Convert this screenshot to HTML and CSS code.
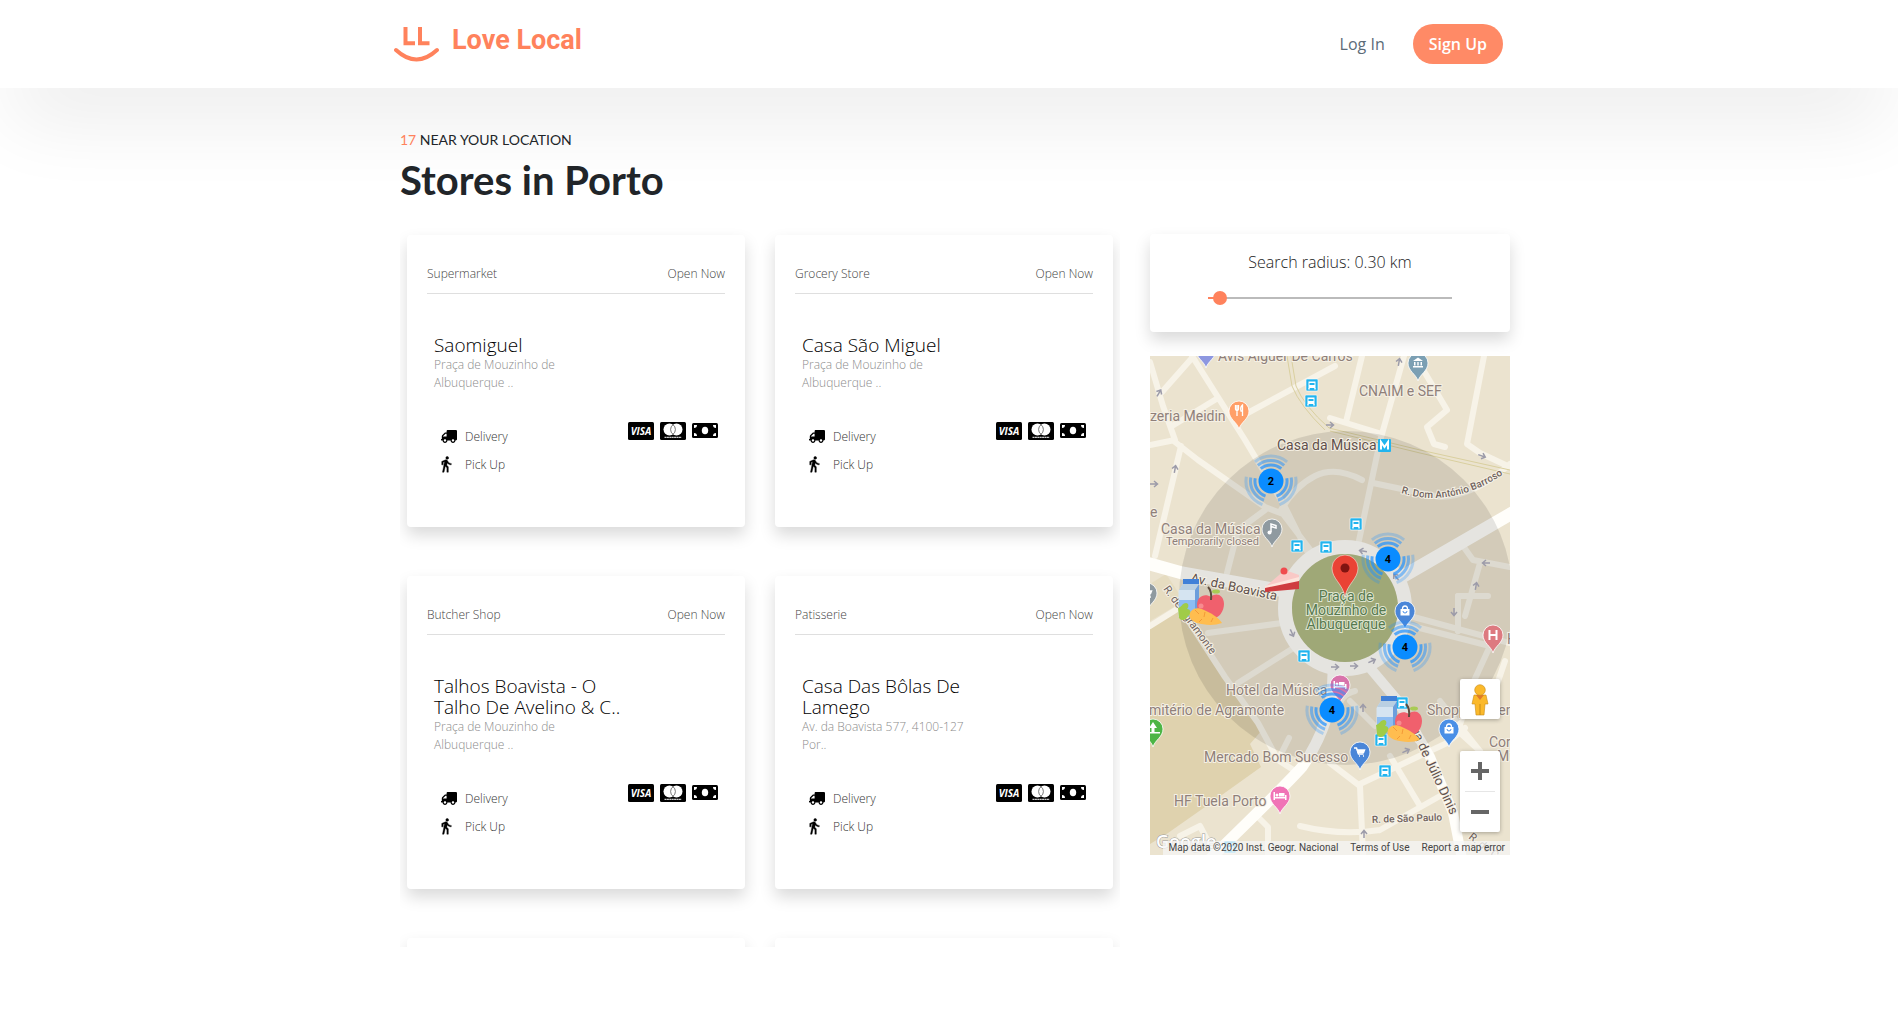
FILE: index.html
```html
<!DOCTYPE html>
<html lang="en">
<head>
<meta charset="utf-8">
<title>Love Local</title>
<meta name="viewport" content="width=device-width, initial-scale=1">
<link rel="stylesheet" href="styles.css">
</head>
<body>
<svg class="sprite" aria-hidden="true">
  <symbol id="truck" viewBox="0 0 640 512"><path transform="matrix(-1 0 0 1 640 0)" d="M624 352h-16V243.900c0-12.700-5.100-24.900-14.100-33.900L494 110.100c-9-9-21.200-14.100-33.900-14.100H416V48c0-26.500-21.500-48-48-48H48C21.500 0 0 21.500 0 48v320c0 26.500 21.500 48 48 48h16c0 53 43 96 96 96s96-43 96-96h128c0 53 43 96 96 96s96-43 96-96h48c8.800 0 16-7.200 16-16v-32c0-8.800-7.200-16-16-16zM160 464c-26.500 0-48-21.500-48-48s21.500-48 48-48 48 21.500 48 48-21.500 48-48 48zm320 0c-26.500 0-48-21.500-48-48s21.500-48 48-48 48 21.500 48 48-21.500 48-48 48zm80-208H416V144h44.100l99.900 99.900V256z"/></symbol>
  <symbol id="walk" viewBox="5 1 15 23"><path stroke="#000" stroke-width=".5" d="M13.500 5.500c1.100 0 2-.9 2-2s-.9-2-2-2-2 .9-2 2 .9 2 2 2zM9.800 8.900L7 23h2.100l1.800-8 2.100 2v6h2v-7.500l-2.100-2 .6-3C14.800 12 16.800 13 19 13v-2c-1.900 0-3.500-1-4.300-2.400l-1-1.600c-.4-.6-1-1-1.700-1-.3 0-.5.1-.8.100L6 8.300V13h2V9.600l1.800-.7"/></symbol>
  <symbol id="visa" viewBox="0 0 26 18"><rect width="26" height="18" rx="1.500"/><text x="13" y="13" text-anchor="middle" class="visa-word">VISA</text></symbol>
  <symbol id="mastercard" viewBox="0 0 26 18"><rect width="26" height="18" rx="1.500"/><circle cx="9.500" cy="7.500" r="6" fill="#fff"/><circle cx="16.500" cy="7.500" r="6" fill="#fff"/><path d="M13 2.700a6 6 0 0 1 0 9.600a6 6 0 0 1 0-9.600z" fill="#fff" stroke="#555" stroke-width=".8"/><path d="M4.500 15.400h17" stroke="#ccc" stroke-width="1.200" stroke-dasharray="2 .4"/></symbol>
  <symbol id="cash" viewBox="0 0 26 18"><rect y="1" width="26" height="15" rx="1.500"/><ellipse cx="13" cy="8.500" rx="3.200" ry="3.800" fill="#fff"/><path fill="#fff" d="M2 3h3a3 3 0 0 1-3 3zM24 3h-3a3 3 0 0 0 3 3zM2 14h3a3 3 0 0 0-3-3zM24 14h-3a3 3 0 0 1 3-3z"/></symbol>
</svg>

<header class="topbar">
  <div class="topbar-inner">
    <a class="brand" href="#">
      <svg class="brand-mark" viewBox="0 0 46 36" aria-hidden="true"><path d="M11.500 1v16.200h9.500M26 1v16.200h9.500" fill="none" stroke="#ff825c" stroke-width="4"/><path d="M2 24Q22.500 43 43 24" fill="none" stroke="#ff825c" stroke-width="4" stroke-linecap="round"/></svg>
      <span>Love Local</span>
    </a>
    <nav class="account">
      <a class="login" href="#">Log In</a>
      <button class="signup" type="button">Sign Up</button>
    </nav>
  </div>
</header>

<main class="page">
  <p class="count"><span>17</span> NEAR YOUR LOCATION</p>
  <h1>Stores in Porto</h1>
  <div class="columns">
    <section class="stores">
      <article class="card">
        <div class="card-head"><span>Supermarket</span><span>Open Now</span></div>
        <div class="card-body">
          <h2>Saomiguel</h2>
          <p class="address">Praça de Mouzinho de<br>Albuquerque ..</p>
          <div class="services">
            <ul><li><svg class="i-truck"><use href="#truck"/></svg>Delivery</li><li><svg class="i-walk"><use href="#walk"/></svg>Pick Up</li></ul>
            <div class="pay"><svg><use href="#visa"/></svg><svg><use href="#mastercard"/></svg><svg><use href="#cash"/></svg></div>
          </div>
        </div>
      </article>
      <article class="card">
        <div class="card-head"><span>Grocery Store</span><span>Open Now</span></div>
        <div class="card-body">
          <h2>Casa São Miguel</h2>
          <p class="address">Praça de Mouzinho de<br>Albuquerque ..</p>
          <div class="services">
            <ul><li><svg class="i-truck"><use href="#truck"/></svg>Delivery</li><li><svg class="i-walk"><use href="#walk"/></svg>Pick Up</li></ul>
            <div class="pay"><svg><use href="#visa"/></svg><svg><use href="#mastercard"/></svg><svg><use href="#cash"/></svg></div>
          </div>
        </div>
      </article>
      <article class="card">
        <div class="card-head"><span>Butcher Shop</span><span>Open Now</span></div>
        <div class="card-body">
          <h2>Talhos Boavista - O<br>Talho De Avelino &amp; C..</h2>
          <p class="address">Praça de Mouzinho de<br>Albuquerque ..</p>
          <div class="services">
            <ul><li><svg class="i-truck"><use href="#truck"/></svg>Delivery</li><li><svg class="i-walk"><use href="#walk"/></svg>Pick Up</li></ul>
            <div class="pay"><svg><use href="#visa"/></svg><svg><use href="#mastercard"/></svg><svg><use href="#cash"/></svg></div>
          </div>
        </div>
      </article>
      <article class="card">
        <div class="card-head"><span>Patisserie</span><span>Open Now</span></div>
        <div class="card-body">
          <h2>Casa Das Bôlas De<br>Lamego</h2>
          <p class="address">Av. da Boavista 577, 4100-127<br>Por..</p>
          <div class="services">
            <ul><li><svg class="i-truck"><use href="#truck"/></svg>Delivery</li><li><svg class="i-walk"><use href="#walk"/></svg>Pick Up</li></ul>
            <div class="pay"><svg><use href="#visa"/></svg><svg><use href="#mastercard"/></svg><svg><use href="#cash"/></svg></div>
          </div>
        </div>
      </article>
      <article class="card card-next"></article>
      <article class="card card-next"></article>
    </section>

    <aside class="side">
      <div class="radius">
        <label for="radius">Search radius: 0.30 km</label>
        <input id="radius" type="range" min="0" max="100" value="2">
      </div>
      <div class="map">
        <svg class="map-canvas" viewBox="0 0 360 499" preserveAspectRatio="xMidYMid slice">
          <defs>
            <g id="bus"><rect x="-6" y="-6" width="12" height="12" rx="1" fill="#22b4ee" stroke="#fff" stroke-width=".6"/><path d="M-3.500-3.500h7v6.500h-7z" fill="#fff"/><path d="M-2.500-2h5v2h-5z" fill="#22b4ee"/><path d="M-3 3v1.500M3 3v1.500" stroke="#fff" stroke-width="1.500"/></g>
            <path id="pin" d="M0 18C-2 11-10 8-10 0a10 10 0 0 1 20 0C10 8 2 11 0 18z" stroke="#fff" stroke-width=".8"/>
            <g id="fan" fill="none" stroke="#1e90ff" stroke-width="3"><path opacity=".7" d="M-10.300-12.300A16 16 0 0 1 10.300-12.300"/><path opacity=".5" d="M-13.200-15.700A20.500 20.500 0 0 1 13.200-15.700"/><path opacity=".27" d="M-16.100-19.200A25 25 0 0 1 16.100-19.200"/></g>
            <g id="cluster"><use href="#fan"/><use href="#fan" transform="rotate(120)"/><use href="#fan" transform="rotate(240)"/><circle r="12.500" fill="#0a8cff"/></g>
            <path id="arrow" d="M-4 0H3M0-3L3.500 0L0 3" fill="none" stroke="#9c9ba9" stroke-width="1.500"/>
            <g id="bag"><path d="M-4.500-2h9v6.500h-9z" fill="#fff"/><path d="M-2.500-2a2.500 3 0 0 1 5 0" fill="none" stroke="#fff" stroke-width="1.300"/><path d="M-2 0a2 2 0 0 0 4 0" fill="none" stroke="#4a8fe6"/></g>
            <g id="cart" fill="none" stroke="#fff" stroke-width="1.500"><path d="M-6-4h2.500l2 6h5"/><path d="M-2.500-2h7l-1 2.500h-5.500z" fill="#fff"/><path d="M-1 4h1M3 4h1"/></g>
            <g id="bed" fill="#fff"><path d="M-6.500-4h1.500v8h-1.500zM-5 1h11.500v1.500H-5zM5-1h1.500v5H5zM-1-3h5.500v3.500H-1z"/><circle cx="-3" cy="-1" r="1.500"/></g>
            <g id="groceries">
              <path d="M6 1h16v5H6z" fill="#4080d8"/><path d="M6 6h16l-4 6v27H1.500V13z" fill="#d5e4f1"/><path d="M2 12h16l4-6H6z" fill="#b9cfe2"/><path d="M2 22h16v17H2z" fill="#8dbdf2"/><path d="M18 12l4-6v32h-4z" fill="#6c9edc"/>
              <path d="M34 19c5-5 13-2 13 7 0 7-5 14-10 14-2 0-2-1-4-1s-2 1-4 1c-5 0-9-6-9-13 0-9 8-12 14-8z" fill="#f0606d"/><path d="M34 22Q35 13 31 9" fill="none" stroke="#5e4b3d" stroke-width="2"/><ellipse cx="39" cy="13.500" rx="4" ry="2" fill="#a9cb54"/><circle cx="24" cy="28" r="2.500" fill="#f78b90"/>
              <path d="M1 30c4-1 4-5 8-5 3 0 3 4 1 6 4 0 5 5 1 7-2 5-7 5-9 2z" fill="#a0cc48"/>
              <path d="M13 35c2-5 8-6 14-3 7 3 14 7 18 13-8 3-18 2-25 0-5-2-9-5-7-10z" fill="#ffbd4f"/><path d="M18 32l4 4M28 34l-1 5M22 44l3-3M36 40l-2 4" stroke="#f49a37"/>
            </g>
          </defs>
          <rect width="360" height="499" fill="#ebe3cf"/>
          <path d="M0 270L32 250L75 321L112 374L100 388L111 411L55 451L18 477L0 488z" fill="#dfd2ae"/>
          <path d="M0 228L16 218L34 245L0 265z" fill="#e6dcc0"/>
          <g fill="none" stroke="#f7f3e8" stroke-width="6" stroke-linejoin="round" stroke-linecap="round">
            <path d="M42 0L95 84L135 151L158 197M0 6L13 50L25 84L0 89M25 86L48 104L115 151L133 158L165 200M31 90L5 200M12 36L42 2M22 70L68 42M92 60L185 10M131 154Q145 130 165 120T212 124M115 154L88 174L77 217"/>
            <path d="M254 0L230 85L207 194M212 0L196 66M180 62L232 78M268 5L297 54L277 71L284 88L295 91M334 0L317 88L330 97L360 111M223 127L290 141Q325 140 360 108M313 190L323 204L360 211M330 207L315 260M308 240H338M308 242V275"/>
            <path d="M260 260L360 287M262 270L340 290L323 327L308 375L330 395M355 305L343 340M180 407L210 430L213 499M210 428L297 387L315 372M240 400L270 450M230 474L290 440M150 470Q190 480 230 474M308 240V275M290 345L330 395"/>
            <path d="M58 277L132 267M88 327L145 291M128 404L139 382M108 461L118 471V499M30 480L50 470L65 499M38 264L75 321L108 367L128 404L145 415M200 345L225 370M205 335Q185 340 190 360M0 270L32 250"/>
          </g>
          <path d="M137 0L142 30Q150 50 175 74M141 0L146 30Q154 50 179 72L270 94L360 114M180 75L270 97L360 118" fill="none" stroke="#d9cf9f" stroke-width="1"/>
          <g fill="none" stroke="#fffefa" stroke-linecap="round">
            <path d="M-4 207L32 217L140 236" stroke-width="13"/><path d="M250 222L364 156" stroke-width="13"/>
            <path d="M183 314Q184 365 152 411Q135 430 60 503" stroke-width="11"/><path d="M215 306L247 344L280 401L303 457L312 503" stroke-width="10"/>
            <ellipse cx="195" cy="252" rx="60" ry="61" stroke-width="14"/>
          </g>
          <ellipse cx="195" cy="252" rx="53" ry="54" fill="#b1bb85"/>
          <circle cx="196" cy="242" r="167" fill="#000" fill-opacity=".1"/>
          <use href="#arrow" transform="translate(9 37) rotate(-60)"/><use href="#arrow" transform="translate(25 113) rotate(-80)"/><use href="#arrow" x="4" y="128"/><use href="#arrow" x="180" y="69"/><use href="#arrow" transform="translate(249 6) rotate(-80)"/><use href="#arrow" transform="translate(332 100) rotate(20)"/><use href="#arrow" transform="translate(336 207) rotate(180)"/><use href="#arrow" transform="translate(326 230) rotate(-80)"/><use href="#arrow" transform="translate(304 256) rotate(90)"/><use href="#arrow" transform="translate(213 195) rotate(190)"/><use href="#arrow" transform="translate(246 221) rotate(230)"/><use href="#arrow" x="185" y="311"/><use href="#arrow" x="204" y="310"/><use href="#arrow" transform="translate(222 305) rotate(-25)"/><use href="#arrow" transform="translate(213 352) rotate(-90)"/><use href="#arrow" transform="translate(256 395) rotate(-25)"/><use href="#arrow" transform="translate(214 478) rotate(-90)"/><use href="#arrow" transform="translate(142 277) rotate(65)"/>
          <use href="#bus" x="162" y="29"/><use href="#bus" x="161" y="45"/><use href="#bus" x="147" y="190"/><use href="#bus" x="176" y="191"/><use href="#bus" x="206" y="168"/><use href="#bus" x="154" y="300"/><use href="#bus" x="235" y="415"/><use href="#bus" x="231" y="384"/><use href="#bus" x="252" y="347"/><use href="#bus" x="80" y="491"/>
          <rect x="228" y="83" width="13" height="13" rx="1" fill="#22b4ee"/><path d="M231 93.500V86L234.500 91L238 86V93.500" fill="none" stroke="#fff" stroke-width="2"/>
          <g class="places">
            <text x="68" y="5">Avis Aiguer De Carros</text><text x="0" y="65">zeria Meidin</text><text x="209" y="40">CNAIM e SEF</text>
            <text x="127" y="94" class="dark">Casa da Música</text><text x="11" y="178">Casa da Música</text><text x="16" y="189" class="small">Temporarily closed</text>
            <text x="0" y="161">e</text><text x="76" y="339">Hotel da Música</text><text x="-1" y="359">mitério de Agramonte</text><text x="54" y="406">Mercado Bom Sucesso</text><text x="24" y="450">HF Tuela Porto</text>
            <text x="277" y="359">Shopping Center</text><text x="339" y="391">Cor</text><text x="347" y="405">Mú</text><text x="357" y="288">H</text>
            <text x="196" y="245" class="park">Praça de</text><text x="196" y="259" class="park">Mouzinho de</text><text x="196" y="273" class="park">Albuquerque</text>
            <path id="barroso" d="M251 137Q306 154 362 112" fill="none"/>
            <text class="street curved"><textPath href="#barroso">R. Dom António Barroso</textPath></text>
            <text class="street avenue" transform="translate(40 226) rotate(12)">Av. da Boavista</text>
            <text class="street" transform="translate(13 233) rotate(54)">R. de Agramonte</text>
            <text class="street avenue" transform="translate(257 366) rotate(65)">Rua de Júlio Dinis</text>
            <text class="street curved" transform="translate(222 467) rotate(-2)">R. de São Paulo</text>
            <text class="street" transform="translate(318 482) rotate(38)">R. de Cedofeita</text>
          </g>
          <g transform="translate(56 -6)"><use href="#pin" fill="#8d97e0"/></g>
          <g transform="translate(89 55)"><use href="#pin" fill="#ff9f68"/><path d="M-3.500-6v4a1.500 1.500 0 0 0 3 0V-6M-2-6V5M3.500 5V-6Q1-4 2 0h1.500" fill="none" stroke="#fff" stroke-width="1.300"/></g>
          <g transform="translate(122 173)"><use href="#pin" fill="#8f9aa0"/><path d="M-1 3V-5L4-3.500V-1L-1-2.500" fill="none" stroke="#fff" stroke-width="1.500"/><circle cx="-2.500" cy="3.500" r="2" fill="#fff"/></g>
          <g transform="translate(268 7)"><use href="#pin" fill="#7b9fb3"/><path d="M-5-2L0-5.500L5-2zM-5 3H5v1.500H-5zM-4-1h1.500v3.500H-4zM-.7-1H.7v3.500H-.7zM2.500-1H4v3.500H2.500z" fill="#fff"/></g>
          <g transform="translate(343 279)"><use href="#pin" fill="#dd7a80"/><path d="M-3.500-5V5M3.500-5V5M-3.500 0h7" stroke="#fff" stroke-width="2"/></g>
          <g transform="translate(299 373)"><use href="#pin" fill="#4a8fe6"/><use href="#bag"/></g>
          <g transform="translate(255 255)"><use href="#pin" fill="#4a86d8"/><use href="#bag"/></g>
          <g transform="translate(210 396)"><use href="#pin" fill="#4a86d8"/><use href="#cart"/></g>
          <g transform="translate(-3 237)"><use href="#pin" fill="#8f9aa0"/><use href="#cart"/></g>
          <g transform="translate(130 440)"><use href="#pin" fill="#f073b6"/><use href="#bed"/></g>
          <g transform="translate(190 329)"><use href="#pin" fill="#d873ab"/><use href="#bed"/></g>
          <g transform="translate(3 373)"><use href="#pin" fill="#4db545"/><path d="M0-7l4 6H1.500V3H7v1.500H-5V3h3.500V-1H-4z" fill="#fff"/></g>
          <use href="#groceries" x="27" y="222"/><use href="#groceries" x="225" y="339"/>
          <path d="M115 231L135 214L149 219V224L115 235z" fill="#f9c9c6"/><path d="M115 230L149 221V225L115 234z" fill="#fde5dc"/><path d="M115 232L149 225V233L115 236z" fill="#cf3c3f"/><circle cx="134" cy="215" r="3.500" fill="#f04b4e"/>
          <path d="M195 241C193 228 182 223 182 212a12.800 12.800 0 0 1 26 0C208 223 197 228 195 241z" fill="#ea4335" stroke="#fff" stroke-width=".5"/><circle cx="195" cy="212" r="4.500" fill="#811411"/>
          <g class="cluster-count"><use href="#cluster" x="121" y="125"/><text x="121" y="129">2</text><use href="#cluster" x="238" y="203"/><text x="238" y="207">4</text><use href="#cluster" x="255" y="291"/><text x="255" y="295">4</text><use href="#cluster" x="182" y="354"/><text x="182" y="358">4</text></g>
          <text x="6" y="492" class="google">Google</text>
        </svg>
        <button class="pegman" type="button" aria-label="Street View">
          <svg viewBox="0 0 18 32" width="18" height="32"><path d="M3 11h12l2 9h-3l-1 11H5L4 20H1z" fill="#fbb92b" stroke="#c88b17" stroke-width=".6"/><path d="M5 11h8l-4 5z" fill="#e0792a"/><path d="M9 20v11" stroke="#c88b17"/><circle cx="9" cy="6" r="5.300" fill="#fbb92b" stroke="#c88b17" stroke-width=".6"/></svg>
        </button>
        <div class="zoom"><button type="button" aria-label="Zoom in"><svg viewBox="0 0 18 18"><path d="M0 9h18M9 0v18" stroke="#666" stroke-width="4"/></svg></button><button type="button" aria-label="Zoom out"><svg viewBox="0 0 18 18"><path d="M0 9h18" stroke="#666" stroke-width="4"/></svg></button></div>
        <div class="credits"><span>Map data ©2020 Inst. Geogr. Nacional</span><a href="#">Terms of Use</a><a href="#">Report a map error</a></div>
      </div>
    </aside>
  </div>
</main>
</body>
</html>
```

FILE: styles.css
```css
* { box-sizing: border-box; }

body {
  margin: 0;
  background: #fff;
  color: #212529;
  font-family: "Open Sans", sans-serif;
  font-size: 16px;
}

.sprite { position: absolute; width: 0; height: 0; }

.topbar {
  background: #fff;
  box-shadow: 0 40px 80px -12px rgba(0, 0, 0, .09);
}

.topbar-inner {
  display: flex;
  justify-content: space-between;
  align-items: center;
  max-width: 1140px;
  min-height: 88px;
  margin: 0 auto;
  padding: 0 16px 0 15px;
}

.brand {
  display: flex;
  gap: 12px;
  color: #ff825c;
  font: 700 27px/28px Roboto, sans-serif;
  text-decoration: none;
}

.brand-mark { width: 46px; height: 36px; }

.account { display: flex; align-items: center; gap: 28px; }

.login { color: #5c6b78; text-decoration: none; }

.signup {
  height: 40px;
  padding: 0 16px;
  border: 0;
  border-radius: 20px;
  background: #ff8a66;
  color: #fff;
  font: 600 16px "Open Sans", sans-serif;
}

.page {
  position: relative;
  max-width: 1140px;
  margin: 0 auto;
  padding: 40px 9px 0 21px;
}

.count { margin: 0; font: 14px/24px Lato, sans-serif; }
.count span { color: #ff825c; }

h1 { margin: 4px 0 15px; font: 700 40px/48px Lato, sans-serif; }

.columns {
  display: grid;
  grid-template-columns: 2fr 1fr;
  gap: 30px;
  align-items: start;
}

.stores {
  display: grid;
  grid-template-columns: 1fr 1fr;
  align-content: start;
  gap: 49px 30px;
  height: calc(100vh - 306px);
  padding: 16px 7px 0;
  overflow-y: auto;
  scrollbar-width: none;
}

.card, .radius {
  border-radius: 4px;
  background: #fff;
  box-shadow: 0 8px 16px rgba(0, 0, 0, .15);
}

.card { padding: 30px 20px 49px; }

.card-next { height: 293px; }

.card-head {
  display: flex;
  justify-content: space-between;
  padding-bottom: 10px;
  border-bottom: 1px solid #dfdfdf;
  color: #444;
  font-size: 12px;
  font-weight: 300;
  line-height: 18px;
}

.card-body { padding: 41px 7px 0; }

h2 { margin: 0; color: #000; font-size: 19px; font-weight: 300; line-height: 21px; }

.address { margin: 0; color: #8c8c8c; font-size: 12px; font-weight: 300; line-height: 18px; }

.services { display: flex; justify-content: space-between; padding-top: 30px; }

.services ul { margin: 0; padding: 0; list-style: none; color: #333; font-size: 12px; font-weight: 300; }
.services li { display: grid; grid-template-columns: 24px auto; align-items: center; height: 28px; padding-left: 7px; }
.i-truck { width: 16px; height: 13px; }
.i-walk { width: 11px; height: 17px; }

.pay { display: flex; gap: 6px; }
.pay svg { width: 26px; height: 18px; }
.visa-word { fill: #fff; font: italic 700 10px "Open Sans", sans-serif; }

.side { display: grid; gap: 24px; padding-top: 15px; }

.radius {
  display: flex;
  flex-direction: column;
  align-items: center;
  gap: 17px;
  padding: 16px 58px 27px;
}

.radius label { color: #222; font-weight: 300; line-height: 24px; }

.radius input {
  width: 100%;
  height: 14px;
  margin: 0;
  background: linear-gradient(to right, #ff825c 12px, #bbb 12px) center / 100% 2px no-repeat;
  appearance: none;
}

.radius input::-webkit-slider-thumb {
  width: 14px;
  height: 14px;
  border-radius: 50%;
  background: #ff825c;
  appearance: none;
}

.map { position: relative; height: 499px; overflow: hidden; }
.map-canvas { display: block; width: 100%; height: 100%; }

.places { fill: #8f7f7a; stroke: #f5f0e4; stroke-width: 2px; font: 14px Roboto, sans-serif; }
.places text { paint-order: stroke; }
.places path { stroke: none; }
.places .dark { fill: #5f4f4b; }
.places .small { font-size: 11px; }
.places .street { fill: #6f625d; font-size: 11px; }
.places .avenue { fill: #5f504c; font-size: 13px; }
.places .curved { font-size: 10px; font-weight: 500; }
.places .park { fill: #56794f; stroke: #dfe5d0; text-anchor: middle; }
.cluster-count { font: 700 11px Roboto, sans-serif; text-anchor: middle; }
.google { fill: #fff; stroke: #999; stroke-width: 1px; paint-order: stroke; font: 600 18px "Open Sans", sans-serif; }

.pegman, .zoom {
  position: absolute;
  right: 10px;
  width: 40px;
  border: 0;
  border-radius: 2px;
  background: #fff;
  box-shadow: 0 1px 4px rgba(0, 0, 0, .3);
}

.pegman { bottom: 136px; height: 40px; padding: 4px 0 0; }
.zoom { bottom: 23px; display: grid; padding: 0 5px; }
.zoom button { height: 40px; padding: 0; border: 0; background: none; }
.zoom button + button { height: 41px; border-top: 1px solid #e6e6e6; }
.zoom svg { width: 18px; height: 18px; vertical-align: middle; }

.credits {
  position: absolute;
  right: 0;
  bottom: 0;
  display: flex;
  gap: 12px;
  padding: 0 5px 0 6px;
  background: rgba(245, 245, 245, .75);
  color: #444;
  font: 10px/14px Roboto, sans-serif;
}

.credits a { color: inherit; text-decoration: none; }
```
